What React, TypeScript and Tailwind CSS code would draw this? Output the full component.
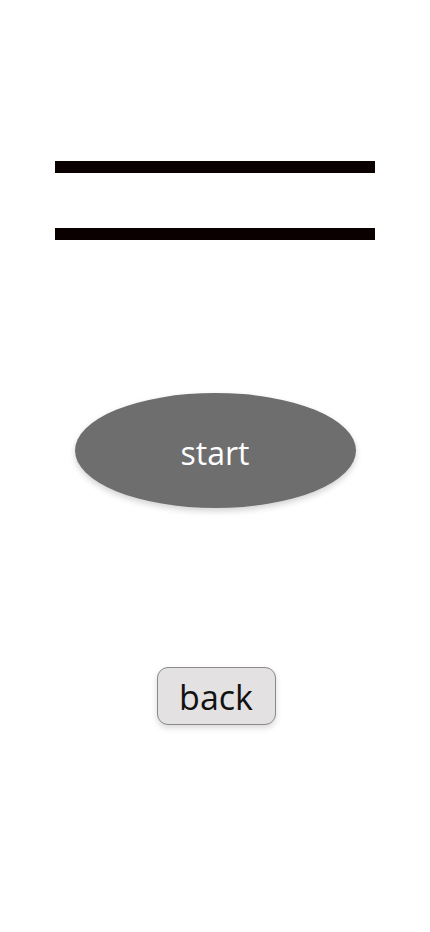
const App = () => {
  return (
    <div className="flex min-h-[932px] w-full flex-col items-center bg-white font-['Open_Sans',sans-serif]">
      <div className="mt-[161px] h-[12px] w-[320px] bg-[#0a0000]" />
      <div className="mt-[55px] h-[12px] w-[320px] bg-[#0a0000]" />
      <button className="mt-[153px] flex h-[115px] w-[281px] items-center justify-center rounded-[50%] bg-[#6e6e6e] pt-[4px] text-[32px] text-white shadow-[0_3px_6px_rgba(0,0,0,0.18)]">
        start
      </button>
      <button className="ml-[2px] mt-[159px] flex h-[58px] w-[119px] items-center justify-center rounded-[11px] border border-[#8a8a8a] bg-[#e3e1e1] pt-[2px] text-[34px] text-[#111] shadow-[0_3px_6px_rgba(0,0,0,0.15)]">
        back
      </button>
    </div>
  );
};

export default App;
